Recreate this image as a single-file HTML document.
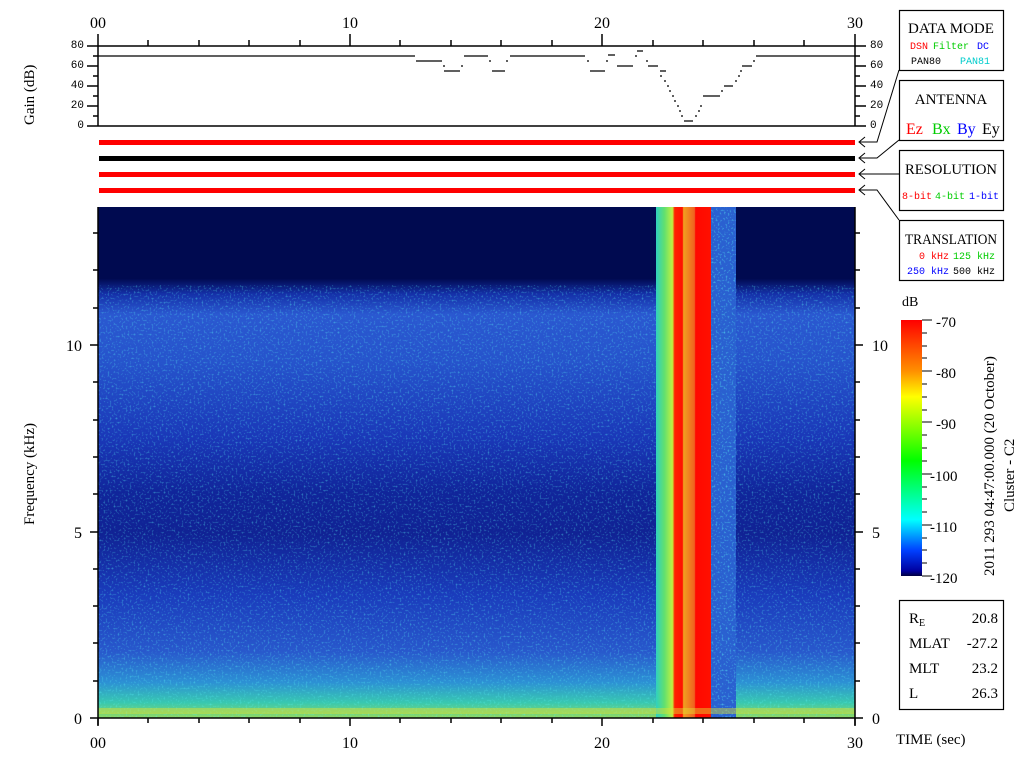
<!DOCTYPE html>
<html><head><meta charset="utf-8"><style>
body{margin:0;background:#fff;width:1024px;height:768px;overflow:hidden;font-family:"Liberation Mono",monospace}
svg{position:absolute;left:0;top:0}
</style></head><body>
<svg width="1024" height="768" viewBox="0 0 1024 768" xmlns="http://www.w3.org/2000/svg">
<defs>
<linearGradient id="bg" x1="0" y1="0" x2="0" y2="1">
<stop offset="0" stop-color="#000a50"/>
<stop offset="0.14" stop-color="#000a50"/>
<stop offset="0.17" stop-color="#1430a8"/>
<stop offset="0.21" stop-color="#2a58d0"/>
<stop offset="0.3" stop-color="#2654cc"/>
<stop offset="0.45" stop-color="#1a38b8"/>
<stop offset="0.56" stop-color="#10259a"/>
<stop offset="0.64" stop-color="#102294"/>
<stop offset="0.76" stop-color="#1a3cbc"/>
<stop offset="0.87" stop-color="#2858cc"/>
<stop offset="0.93" stop-color="#2c90d4"/>
<stop offset="0.97" stop-color="#38c8b0"/>
<stop offset="1" stop-color="#90d860"/>
</linearGradient>
<linearGradient id="band" x1="0" y1="0" x2="1" y2="0">
<stop offset="0" stop-color="#30d0c0"/>
<stop offset="0.15" stop-color="#60e070"/>
<stop offset="0.3" stop-color="#c0f040"/>
<stop offset="0.34" stop-color="#ff2000"/>
<stop offset="0.48" stop-color="#ff1000"/>
<stop offset="0.5" stop-color="#f0a020"/>
<stop offset="0.7" stop-color="#f06020"/>
<stop offset="0.72" stop-color="#ff0800"/>
<stop offset="1" stop-color="#ff1000"/>
</linearGradient>
<linearGradient id="cb" x1="0" y1="0" x2="0" y2="1">
<stop offset="0" stop-color="#ff0000"/>
<stop offset="0.2" stop-color="#ff9000"/>
<stop offset="0.3" stop-color="#ffff00"/>
<stop offset="0.55" stop-color="#00ff00"/>
<stop offset="0.68" stop-color="#00ff90"/>
<stop offset="0.78" stop-color="#00ffff"/>
<stop offset="0.9" stop-color="#0040ff"/>
<stop offset="0.98" stop-color="#0000a0"/>
<stop offset="1" stop-color="#000040"/>
</linearGradient>
<filter id="nz" x="0" y="0" width="100%" height="100%">
<feTurbulence type="fractalNoise" baseFrequency="0.5" numOctaves="1" seed="3"/>
<feColorMatrix values="0 0 0 0 0.1  0 0 0 0 0.9  0 0 0 0 0.9  0 0 0 3 -1.6"/>
</filter>
</defs>
<!-- spectrogram -->
<rect x="98" y="207" width="757" height="511" fill="url(#bg)"/>
<rect x="98" y="285" width="757" height="433" filter="url(#nz)" opacity="0.45"/>
<rect x="711" y="207" width="25" height="511" fill="#2a60d0"/>
<rect x="711" y="207" width="25" height="511" filter="url(#nz)" opacity="0.6"/>
<rect x="656" y="207" width="55" height="511" fill="url(#band)"/>
<rect x="98" y="708" width="757" height="6" fill="#e0e030" opacity="0.45"/>
<!-- axes spectrogram -->
<g stroke="#000" stroke-width="1.5" fill="none">
<line x1="98" y1="718" x2="855" y2="718"/>
<line x1="98" y1="207" x2="98" y2="725"/>
<line x1="855" y1="207" x2="855" y2="725"/>
<path d="M98 718v8M350 718v8M602 718v8M855 718v8"/>
<path d="M148 718v5M199 718v5M249 718v5M300 718v5M400 718v5M451 718v5M501 718v5M552 718v5M653 718v5M703 718v5M754 718v5M804 718v5"/>
<path d="M90 718h8M90 532h8M90 345h8M93 681h5M93 643h5M93 606h5M93 569h5M93 494h5M93 457h5M93 420h5M93 382h5M93 308h5M93 270h5M93 233h5"/>
<path d="M855 718h8M855 532h8M855 345h8M855 681h5M855 643h5M855 606h5M855 569h5M855 494h5M855 457h5M855 420h5M855 382h5M855 308h5M855 270h5M855 233h5"/>
</g>
<!-- gain panel -->
<g stroke="#000" stroke-width="1.5" fill="none">
<line x1="87" y1="46" x2="866" y2="46"/>
<line x1="87" y1="126" x2="866" y2="126"/>
<line x1="98" y1="34" x2="98" y2="126"/>
<line x1="855" y1="34" x2="855" y2="126"/>
<path d="M350 34v12M602 34v12"/>
<path d="M148 40v6M199 40v6M249 40v6M300 40v6M400 40v6M451 40v6M501 40v6M552 40v6M653 40v6M703 40v6M754 40v6M804 40v6"/>
<path d="M93 56h5M87 66h11M93 76h5M87 86h11M93 96h5M87 106h11M93 116h5"/>
<path d="M855 56h5M855 66h11M855 76h5M855 86h11M855 96h5M855 106h11M855 116h5"/>
</g>
<g stroke="#000" stroke-width="1.3" fill="none">
<path d="M98 56H415M416 61H442M444 71H460M464 56H488M492 71H505M510 56H585M590 71H605M608 55H615M617 66H633M637 51H643M648 66H658M660 71H666M684 121H693M703 96H720M724 86H733M742 66H752M756 56H855"/>
<path d="M443 66h2M461 66h2M489 61h2M506 61h2M587 61h2M606 61h2M646 61h2M635 56h2M660 76h2M664 81h2M667 86h2M669 91h2M672 96h2M674 101h2M677 106h2M679 111h2M681 116h2M695 116h2M698 111h2M700 106h2M721 91h2M735 81h2M738 76h2M740 71h2M753 61h2"/>
</g>
<!-- bars -->
<rect x="99" y="140" width="756" height="5" fill="#f00"/>
<rect x="99" y="156" width="756" height="5" fill="#000"/>
<rect x="99" y="172" width="756" height="5" fill="#f00"/>
<rect x="99" y="188" width="756" height="5" fill="#f00"/>
<!-- connector lines -->
<g stroke="#000" stroke-width="1" fill="none">
<path d="M899 70L877 142H860M865 137L859 142L865 147"/>
<path d="M899 140L877 158H860M865 153L859 158L865 163"/>
<path d="M899 174H860M865 169L859 174L865 179"/>
<path d="M899 220L877 190H860M865 185L859 190L865 195"/>
</g>
<!-- boxes -->
<g stroke="#000" stroke-width="1.2" fill="#fff">
<rect x="899.5" y="10.5" width="104" height="60"/>
<rect x="899.5" y="80.5" width="104" height="60"/>
<rect x="899.5" y="150.5" width="104" height="60"/>
<rect x="899.5" y="220.5" width="104" height="60"/>
<rect x="899.5" y="600.5" width="104" height="109"/>
</g>
<rect x="901" y="320" width="21" height="256" fill="url(#cb)"/>
<g stroke="#000" stroke-width="1" fill="none">
<path d="M922 320h10M922 576h10M922 371h10M922 422h10M922 474h10M922 525h10"/>
<path d="M922 333h5M922 346h5M922 358h5M922 384h5M922 397h5M922 410h5M922 435h5M922 448h5M922 461h5M922 487h5M922 499h5M922 512h5M922 538h5M922 550h5M922 563h5"/>
</g>
<g font-family="Liberation Serif, serif" font-size="16" fill="#000">
<text x="98" y="28" text-anchor="middle">00</text>
<text x="350" y="28" text-anchor="middle">10</text>
<text x="602" y="28" text-anchor="middle">20</text>
<text x="855" y="28" text-anchor="middle">30</text>
<text x="98" y="748" text-anchor="middle">00</text>
<text x="350" y="748" text-anchor="middle">10</text>
<text x="602" y="748" text-anchor="middle">20</text>
<text x="855" y="748" text-anchor="middle">30</text>
<text x="82" y="724" text-anchor="end">0</text>
<text x="82" y="538" text-anchor="end">5</text>
<text x="82" y="351" text-anchor="end">10</text>
<text x="872" y="724">0</text>
<text x="872" y="538">5</text>
<text x="872" y="351">10</text>
<text transform="translate(34,125) rotate(-90)" font-size="15">Gain (dB)</text>
<text transform="translate(34,525) rotate(-90)" font-size="15">Frequency (kHz)</text>
<text x="896" y="744" font-size="15">TIME (sec)</text>
<text x="902" y="306" font-size="14">dB</text>
<text x="936" y="327" font-size="15">-70</text>
<text x="936" y="378" font-size="15">-80</text>
<text x="936" y="429" font-size="15">-90</text>
<text x="930" y="481" font-size="15">-100</text>
<text x="930" y="532" font-size="15">-110</text>
<text x="930" y="583" font-size="15">-120</text>
<text transform="translate(994,576) rotate(-90)" font-size="15">2011 293 04:47:00.000 (20 October)</text>
<text transform="translate(1014,512) rotate(-90)" font-size="15">Cluster - C2</text>
<text x="951" y="33" font-size="15" text-anchor="middle">DATA MODE</text>
<text x="951" y="104" font-size="15" text-anchor="middle">ANTENNA</text>
<text x="951" y="174" font-size="15" text-anchor="middle" textLength="92" lengthAdjust="spacingAndGlyphs">RESOLUTION</text>
<text x="951" y="244" font-size="15" text-anchor="middle" textLength="92" lengthAdjust="spacingAndGlyphs">TRANSLATION</text>
<text x="906" y="134" font-size="16" fill="#f00">Ez</text>
<text x="932" y="134" font-size="16" fill="#0c0">Bx</text>
<text x="957" y="134" font-size="16" fill="#00f">By</text>
<text x="982" y="134" font-size="16">Ey</text>
<text x="909" y="623" font-size="15">R<tspan font-size="10" dy="3">E</tspan></text>
<text x="998" y="623" font-size="15" text-anchor="end">20.8</text>
<text x="909" y="648" font-size="15">MLAT</text>
<text x="998" y="648" font-size="15" text-anchor="end">-27.2</text>
<text x="909" y="673" font-size="15">MLT</text>
<text x="998" y="673" font-size="15" text-anchor="end">23.2</text>
<text x="909" y="698" font-size="15">L</text>
<text x="998" y="698" font-size="15" text-anchor="end">26.3</text>
</g>
<g font-family="Liberation Mono, monospace" font-size="11" fill="#000">
<text x="84" y="48" text-anchor="end">80</text>
<text x="84" y="68" text-anchor="end">60</text>
<text x="84" y="88" text-anchor="end">40</text>
<text x="84" y="108" text-anchor="end">20</text>
<text x="84" y="128" text-anchor="end">0</text>
<text x="870" y="48">80</text>
<text x="870" y="68">60</text>
<text x="870" y="88">40</text>
<text x="870" y="108">20</text>
<text x="870" y="128">0</text>
</g>
<g font-family="Liberation Mono, monospace" font-size="10" fill="#000">
<text x="910" y="49" fill="#f00">DSN</text>
<text x="933" y="49" fill="#0c0">Filter</text>
<text x="977" y="49" fill="#00f">DC</text>
<text x="911" y="64">PAN80</text>
<text x="960" y="64" fill="#0cc">PAN81</text>
<text x="902" y="199" fill="#f00">8-bit</text>
<text x="935" y="199" fill="#0c0">4-bit</text>
<text x="969" y="199" fill="#00f">1-bit</text>
<text x="919" y="259" fill="#f00">0 kHz</text>
<text x="953" y="259" fill="#0c0">125 kHz</text>
<text x="907" y="274" fill="#00f">250 kHz</text>
<text x="953" y="274">500 kHz</text>
</g>
</svg>
</body></html>
